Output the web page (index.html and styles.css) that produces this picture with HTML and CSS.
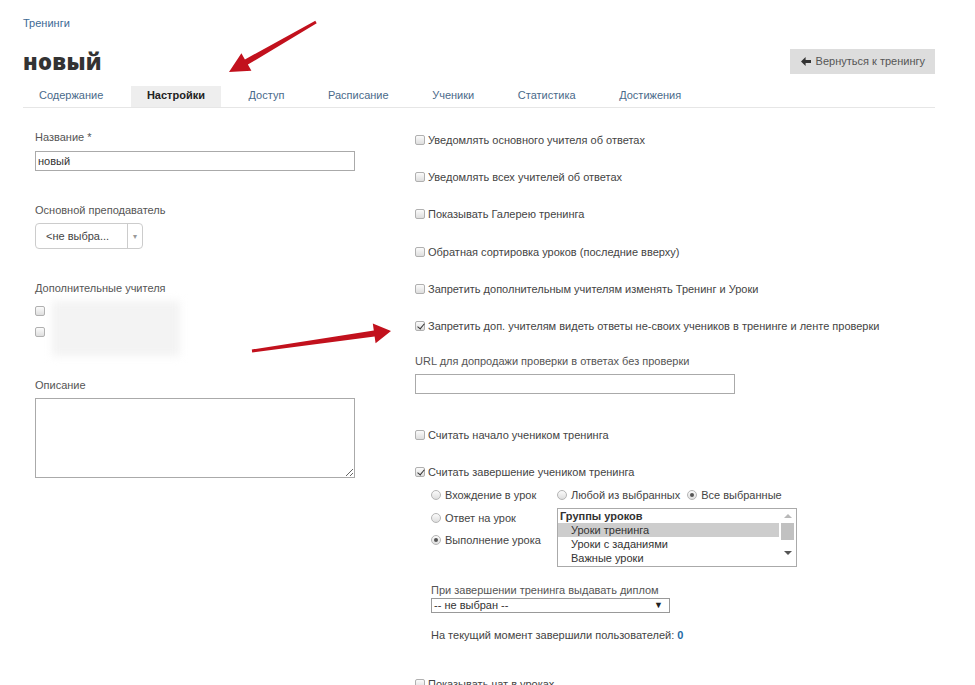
FILE: index.html
```html
<!DOCTYPE html>
<html lang="ru">
<head>
<meta charset="utf-8">
<title>новый — Настройки</title>
<link rel="stylesheet" href="styles.css">
</head>
<body>
<div class="page">
  <div class="crumb"><a href="#">Тренинги</a></div>
  <div class="head">
    <h1 class="title">новый</h1>
    <button class="back"><svg width="10" height="9" viewBox="0 0 10 9"><path d="M0 4.5 L4.6 0 L4.6 2.9 L10 2.9 L10 6.1 L4.6 6.1 L4.6 9 Z" fill="#333"/></svg>Вернуться к тренингу</button>
  </div>
  <nav class="tabs">
    <a class="tab">Содержание</a>
    <a class="tab active">Настройки</a>
    <a class="tab">Доступ</a>
    <a class="tab">Расписание</a>
    <a class="tab">Ученики</a>
    <a class="tab">Статистика</a>
    <a class="tab">Достижения</a>
  </nav>

  <div class="form">
    <div class="col-left">
      <div class="lbl">Название *</div>
      <input class="text" type="text" value="новый">

      <div class="lbl gap">Основной преподаватель</div>
      <div class="pick"><span class="pick-val">&lt;не выбра...</span><span class="pick-arr">▾</span></div>

      <div class="lbl gap">Дополнительные учителя</div>
      <div class="teachers">
        <div class="cbcol"><span class="cb"></span><span class="cb"></span></div>
        <div class="blur"></div>
      </div>

      <div class="lbl gap2">Описание</div>
      <textarea class="area"></textarea>
    </div>

    <div class="col-right">
      <div class="row"><span class="cb"></span>Уведомлять основного учителя об ответах</div>
      <div class="row"><span class="cb"></span>Уведомлять всех учителей об ответах</div>
      <div class="row"><span class="cb"></span>Показывать Галерею тренинга</div>
      <div class="row"><span class="cb"></span>Обратная сортировка уроков (последние вверху)</div>
      <div class="row"><span class="cb"></span>Запретить дополнительным учителям изменять Тренинг и Уроки</div>
      <div class="row"><span class="cb on"></span>Запретить доп. учителям видеть ответы не-своих учеников в тренинге и ленте проверки</div>

      <div class="lbl url-lbl">URL для допродажи проверки в ответах без проверки</div>
      <input class="text" type="text">

      <div class="row first-after">
        <span class="cb"></span>Считать начало учеником тренинга</div>
      <div class="row tight"><span class="cb on"></span>Считать завершение учеником тренинга</div>

      <div class="sub">
        <div class="sub-grid">
          <div class="radios">
            <div class="rrow"><span class="rb"></span>Вхождение в урок</div>
            <div class="rrow"><span class="rb"></span>Ответ на урок</div>
            <div class="rrow"><span class="rb on"></span>Выполнение урока</div>
          </div>
          <div class="groups">
            <div class="rrow"><span class="rb"></span>Любой из выбранных<span class="rb sp on"></span>Все выбранные</div>
            <div class="listbox">
              <div class="lb-items">
                <div class="lb-head">Группы уроков</div>
                <div class="lb-opt sel">Уроки тренинга</div>
                <div class="lb-opt">Уроки с заданиями</div>
                <div class="lb-opt">Важные уроки</div>
              </div>
              <div class="lb-scroll">
                <span class="sc-up"></span>
                <span class="sc-thumb"></span>
                <span class="sc-down"></span>
              </div>
            </div>
          </div>
        </div>

        <div class="lbl dip-lbl">При завершении тренинга выдавать диплом</div>
        <div class="dsel"><span>-- не выбран --</span><span class="dsel-arr">▼</span></div>

        <div class="done">На текущий момент завершили пользователей: <b>0</b></div>
      </div>

      <div class="row chat"><span class="cb"></span>Показывать чат в уроках</div>
    </div>
  </div>

  <svg class="arrows" width="975" height="685" viewBox="0 0 975 685">
    <polygon fill="#c2111d" points="315.3,20.7 316.7,23.3 247.9,64.6 251.4,70.7 229,72 241.4,53.3 244.9,59.4"/>
    <polygon fill="#c2111d" points="251.8,349.5 252.2,352.5 374.6,336.4 375.6,343.3 391,331 372.8,323.5 373.8,330.4"/>
  </svg>
</div>
</body>
</html>
```

FILE: styles.css
```css
* { box-sizing: border-box; }
html, body { margin: 0; padding: 0; background: #fff; }
body {
  font-family: "Liberation Sans", Arial, sans-serif;
  font-size: 11px;
  color: #444;
}
.page {
  position: relative;
  width: 935px;
  padding: 16px 0 40px 23px;
}
.crumb { line-height: 14px; }
.crumb a { color: #3d6a95; text-decoration: none; }

.head {
  margin-top: 17px;
  height: 28px;
  display: flex;
  align-items: center;
  justify-content: space-between;
}
.title {
  margin: 0;
  font-family: "Open Sans", "Liberation Sans", sans-serif;
  font-size: 22px;
  font-weight: 800;
  line-height: 28px;
  color: #333;
  letter-spacing: 0.3px;
}
.back {
  display: flex;
  align-items: center;
  gap: 5px;
  height: 25px;
  padding: 0 10px 0 11px;
  border: 0;
  background: #ddd;
  color: #555;
  font-family: "Liberation Sans", Arial, sans-serif;
  font-size: 11px;
}

.tabs {
  margin-top: 10px;
  display: flex;
  border-bottom: 1px solid #e6e6e6;
  height: 23px;
  padding-top: 1px;
}
.tab {
  padding: 0 16px;
  margin-right: 11.6px;
  height: 21px;
  line-height: 19px;
  color: #4a6a8a;
}
.tab.active {
  background: #eee;
  color: #222;
  font-weight: bold;
}

.form {
  display: grid;
  grid-template-columns: 392px 1fr;
}
.col-left { padding: 22px 0 0 12px; }
.col-right { padding-top: 25px; }

.lbl { line-height: 14px; color: #555; margin-bottom: 7px; }
.lbl.gap { margin-top: 32px; margin-bottom: 6px; }
.lbl.gap2 { margin-top: 22px; margin-bottom: 6px; }

.text {
  display: block;
  width: 320px;
  height: 20px;
  border: 1px solid #aaa;
  padding: 0 2px;
  font-family: "Liberation Sans", Arial, sans-serif;
  font-size: 11px;
  color: #333;
  outline: none;
}

.pick {
  display: flex;
  width: 108px;
  height: 26px;
  border: 1px solid #ccc;
  border-radius: 4px;
  align-items: center;
}
.pick-val { flex: 1; padding-left: 10px; color: #444; border-right: 1px solid #ccc; height: 100%; line-height: 24px; }
.pick-arr { width: 14px; text-align: center; color: #999; font-size: 8px; }

.teachers { display: flex; margin-top: 4px; height: 55px; }
.cbcol { display: flex; flex-direction: column; gap: 11px; padding-top: 5px; }
.blur {
  margin-left: 4px;
  width: 128px;
  height: 55px;
  background: #f3f3f3;
  filter: blur(4px);
}

.area {
  display: block;
  width: 320px;
  height: 80px;
  border: 1px solid #aaa;
  font-family: "Liberation Sans", Arial, sans-serif;
}

.cb {
  position: relative;
  display: inline-block;
  flex: none;
  width: 10px;
  height: 10px;
  border: 1px solid #b0b0b0;
  border-radius: 2px;
  background: linear-gradient(#fbfbfb, #dedede);
  margin-right: 3px;
}
.cb.on::after {
  content: "";
  position: absolute;
  left: 2.5px;
  top: 0;
  width: 3px;
  height: 6px;
  border: solid #333;
  border-width: 0 1.6px 1.6px 0;
  transform: rotate(40deg);
}

.row {
  display: flex;
  align-items: center;
  height: 14px;
  margin-bottom: 23.2px;
  color: #444;
}
.url-lbl { margin-top: -2px; margin-bottom: 6px; }
.first-after { margin-top: 34px; }
.row.tight { margin-bottom: 9px; margin-top: -0.5px; }

.sub { margin-left: 16px; }
.sub-grid { display: grid; grid-template-columns: 126px auto; }
.rrow { display: flex; align-items: center; height: 14px; margin-bottom: 9px; }
.radios .rrow:nth-child(2) { margin-bottom: 8px; }
.groups .rrow { margin-bottom: 6px; }
.rb {
  position: relative;
  display: inline-block;
  flex: none;
  width: 10px;
  height: 10px;
  border: 1px solid #b5b5b5;
  border-radius: 50%;
  background: linear-gradient(#fbfbfb, #dedede);
  margin-right: 4px;
}
.rb.sp { margin-left: 7px; }
.rb.on::after {
  content: "";
  position: absolute;
  left: 2px;
  top: 2px;
  width: 4px;
  height: 4px;
  border-radius: 50%;
  background: #555;
}

.listbox {
  display: flex;
  width: 240px;
  height: 59px;
  border: 1px solid #aaa;
  overflow: hidden;
  color: #333;
}
.lb-items { flex: 1; padding-top: 0; }
.lb-head { font-weight: bold; line-height: 14px; padding-left: 2px; }
.lb-opt { line-height: 14px; padding-left: 13px; }
.lb-opt.sel { background: #cdcdcd; }
.lb-scroll {
  width: 17px;
  display: flex;
  flex-direction: column;
  align-items: center;
  background: #fff;
}
.sc-up, .sc-down { width: 0; height: 0; border-left: 4px solid transparent; border-right: 4px solid transparent; }
.sc-up { border-bottom: 4px solid #b8b8b8; margin-top: 5px; }
.sc-thumb { width: 13px; height: 17px; background: #c1c1c1; margin-top: 5px; }
.sc-down { border-top: 4px solid #555; margin-top: 11px; }

.dip-lbl { margin-top: 16px; margin-bottom: 1px; }
.dsel {
  display: flex;
  justify-content: space-between;
  align-items: center;
  width: 239px;
  height: 15px;
  border: 1px solid #999;
  padding: 0 6px 0 2px;
  color: #333;
  line-height: 13px;
}
.dsel-arr { font-size: 9px; color: #222; }

.done { margin-top: 15px; line-height: 14px; color: #444; }
.done b { color: #1f6aa5; }

.row.chat { margin-top: 35px; }

.arrows {
  position: absolute;
  left: 0;
  top: 0;
  pointer-events: none;
}
```
